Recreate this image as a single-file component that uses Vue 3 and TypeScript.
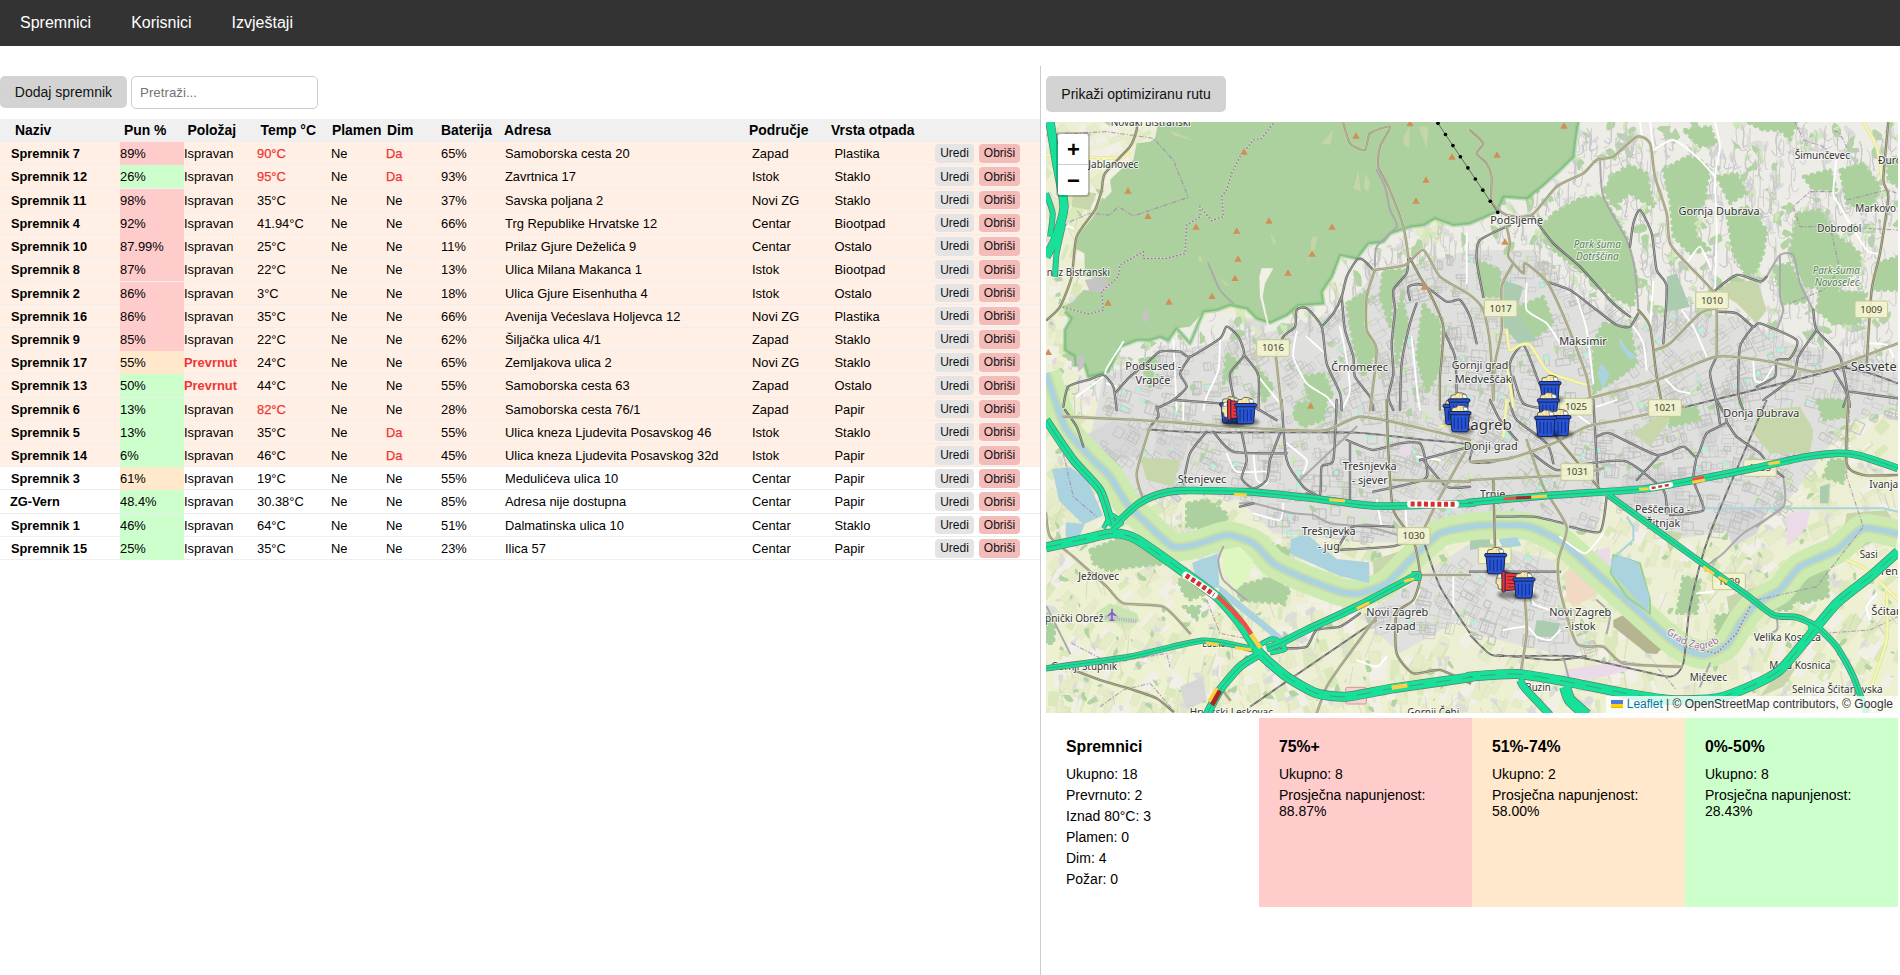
<script setup lang="ts">
import { ref, computed } from 'vue'

interface Bin {
  name: string
  fill: number
  tipped: boolean
  temp: number
  smoke: boolean
  battery: number
  address: string
  area: string
  waste: string
}

function bin(name: string, fill: number, tipped: boolean, temp: number, smoke: boolean, battery: number, address: string, area: string, waste: string): Bin {
  return { name, fill, tipped, temp, smoke, battery, address, area, waste }
}

const bins: Bin[] = [
  bin('Spremnik 7', 89, false, 90, true, 65, 'Samoborska cesta 20', 'Zapad', 'Plastika'),
  bin('Spremnik 12', 26, false, 95, true, 93, 'Zavrtnica 17', 'Istok', 'Staklo'),
  bin('Spremnik 11', 98, false, 35, false, 37, 'Savska poljana 2', 'Novi ZG', 'Staklo'),
  bin('Spremnik 4', 92, false, 41.94, false, 66, 'Trg Republike Hrvatske 12', 'Centar', 'Biootpad'),
  bin('Spremnik 10', 87.99, false, 25, false, 11, 'Prilaz Gjure Deželića 9', 'Centar', 'Ostalo'),
  bin('Spremnik 8', 87, false, 22, false, 13, 'Ulica Milana Makanca 1', 'Istok', 'Biootpad'),
  bin('Spremnik 2', 86, false, 3, false, 18, 'Ulica Gjure Eisenhutha 4', 'Istok', 'Ostalo'),
  bin('Spremnik 16', 86, false, 35, false, 66, 'Avenija Većeslava Holjevca 12', 'Novi ZG', 'Plastika'),
  bin('Spremnik 9', 85, false, 22, false, 62, 'Šiljačka ulica 4/1', 'Zapad', 'Staklo'),
  bin('Spremnik 17', 55, true, 24, false, 65, 'Zemljakova ulica 2', 'Novi ZG', 'Staklo'),
  bin('Spremnik 13', 50, true, 44, false, 55, 'Samoborska cesta 63', 'Zapad', 'Ostalo'),
  bin('Spremnik 6', 13, false, 82, false, 28, 'Samoborska cesta 76/1', 'Zapad', 'Papir'),
  bin('Spremnik 5', 13, false, 35, true, 55, 'Ulica kneza Ljudevita Posavskog 46', 'Istok', 'Staklo'),
  bin('Spremnik 14', 6, false, 46, true, 45, 'Ulica kneza Ljudevita Posavskog 32d', 'Istok', 'Papir'),
  bin('Spremnik 3', 61, false, 19, false, 55, 'Medulićeva ulica 10', 'Centar', 'Papir'),
  bin('ZG-Vern', 48.4, false, 30.38, false, 85, 'Adresa nije dostupna', 'Centar', 'Papir'),
  bin('Spremnik 1', 46, false, 64, false, 51, 'Dalmatinska ulica 10', 'Centar', 'Staklo'),
  bin('Spremnik 15', 25, false, 35, false, 23, 'Ilica 57', 'Centar', 'Papir'),
]

const query = ref('')
const shown = computed(() => bins.filter((b) => b.name.toLowerCase().includes(query.value.toLowerCase())))
const level = (v: number) => (v >= 75 ? 'high' : v > 50 ? 'mid' : 'low')
const alarming = (b: Bin) => b.fill >= 75 || b.tipped || b.temp > 80 || b.smoke

const headers = ['Naziv', 'Pun %', 'Položaj', 'Temp °C', 'Plamen', 'Dim', 'Baterija', 'Adresa', 'Područje', 'Vrsta otpada']

const stats = [
  { title: 'Spremnici', tone: 'plain', lines: ['Ukupno: 18', 'Prevrnuto: 2', 'Iznad 80°C: 3', 'Plamen: 0', 'Dim: 4', 'Požar: 0'] },
  { title: '75%+', tone: 'high', lines: ['Ukupno: 8', 'Prosječna napunjenost: 88.87%'] },
  { title: '51%-74%', tone: 'mid', lines: ['Ukupno: 2', 'Prosječna napunjenost: 58.00%'] },
  { title: '0%-50%', tone: 'low', lines: ['Ukupno: 8', 'Prosječna napunjenost: 28.43%'] },
]

/* ---- map geometry: four sheets, A B over C D, each sheet with local coordinates ---- */
type Sheet = 'A' | 'B' | 'C' | 'D'
type Pt = [number, number]
const origin: Record<Sheet, Pt> = { A: [0, 0], B: [1290, 0], C: [0, 870], D: [1290, 870] }

function pts(spec: string): Pt[] {
  let o: Pt = origin.A
  return spec.split(/\s+/).map((tok) => {
    let t = tok
    if (/^[ABCD]/.test(t)) {
      o = origin[t[0] as Sheet]
      t = t.slice(1)
    }
    const [x, y] = t.split(',').map(Number)
    return [x + o[0], y + o[1]] as Pt
  })
}
const line = (s: string) => 'M' + pts(s).map((p) => p.join(' ')).join('L')
const poly = (s: string) => line(s) + 'Z'
function smooth(s: string): string {
  const p = pts(s)
  let d = `M${p[0][0]} ${p[0][1]}`
  for (let i = 0; i < p.length - 1; i++) {
    const a = p[Math.max(0, i - 1)], b = p[i], c = p[i + 1], e = p[Math.min(p.length - 1, i + 2)]
    d += `C${b[0] + (c[0] - a[0]) / 9} ${b[1] + (c[1] - a[1]) / 9} ${c[0] - (e[0] - b[0]) / 9} ${c[1] - (e[1] - b[1]) / 9} ${c[0]} ${c[1]}`
  }
  return d
}
function inside(x: number, y: number, p: Pt[]): boolean {
  let r = false
  for (let i = 0, j = p.length - 1; i < p.length; j = i++) {
    const [xi, yi] = p[i], [xj, yj] = p[j]
    if (yi > y !== yj > y && x < ((xj - xi) * (y - yi)) / (yj - yi) + xi) r = !r
  }
  return r
}

const nature = 'A355,36 345,85 330,95 290,100 280,150 235,185 210,210 215,245 180,280 160,320 110,380 105,415 133,430 135,500 170,505 210,525 190,545 130,540 100,575 65,590 95,625 75,660 75,720 105,738 105,765 135,765 145,800 205,785 240,710 290,690 330,690 360,680 385,690 410,655 450,650 490,605 530,600 570,585 620,595 650,625 690,638 740,615 775,585 850,580 845,545 875,500 900,435 950,445 985,400 1030,395 1050,370 1110,350 1150,345 1185,325 1240,345 1290,340 B80,305 100,260 170,265 220,225 270,180 310,140 320,60 325,36'
const natureEdge = 'A75,605 95,625 75,660 75,720 105,738 105,765 135,765 145,800 205,785 240,710 290,690 330,690 360,680 385,690 410,655 450,700 490,605 530,600 570,585 620,595 650,625 690,638 740,615 775,585 850,580 845,545 875,500 900,435 950,445 985,400 1030,395 1050,370 1110,350 1150,345 1185,325 1240,345 1290,340 B80,305 100,260 170,265 220,225 270,180 310,140 320,60 325,36'
const city = 'A170,900 190,800 330,740 560,690 760,650 900,600 1000,500 1290,420 B190,420 300,560 500,640 620,600 800,620 960,700 1284,760 D1284,30 1130,70 940,320 800,390 600,420 400,290 380,400 0,350 C1290,370 1090,430 900,420 700,400 600,300 420,270 300,300 230,210 150,110'
const newZagreb = 'C960,650 1100,560 1290,430 D0,420 250,480 290,700 380,730 300,770 0,700 C1290,640 1080,760'
const suburb = 'A355,36 330,95 280,150 180,280 140,350 130,430 170,505 70,590 70,660 100,765 145,800 240,710 450,650 530,600 690,638 850,580 900,435 1110,350 1290,340 B80,305 100,260 220,225 310,140 325,36 1284,36 1284,800 900,760 600,720 300,760 0,700 A1000,870 300,880 100,860'
const farSouth = 'C18,480 200,500 450,560 650,760 900,900 1290,860 D700,900 900,700 1284,330 1284,940 C18,940'

const woods = [
  'B250,310 330,265 400,260 440,330 470,380 500,500 490,590 430,560 340,490 250,420 215,350',
  'B400,240 440,190 480,165 530,190 550,290 510,270 480,250 430,290',
  'B580,180 650,140 690,150 720,180 700,280 670,330 680,380 720,420 660,430 610,380 600,270',
  'B770,310 830,290 890,360 880,430 860,480 830,500 790,430',
  'B980,310 1050,300 1090,370 1170,430 1170,470 1100,540 1010,530 960,430',
  'B1110,180 1180,160 1230,230 1200,300 1130,280', 'B1220,460 1284,440 1284,540 1210,540',
  'B1050,540 1190,550 1170,640 1090,640 1040,600', 'B830,36 980,36 960,90 930,60 880,60',
  'B400,640 480,650 500,760 450,800 370,850 370,700', 'B910,470 960,460 990,520 1010,575 940,580',
  'B740,200 800,190 830,250 780,280', 'B640,60 720,50 740,100 690,110', 'B1000,200 1080,180 1100,240 1030,240',
  'B20,450 90,480 90,560 40,560', 'B120,600 220,560 250,640 200,680 140,650', 'B1250,150 1284,140 1284,230 1255,210',
  'A920,580 985,540 970,650 1010,720 970,800 940,700', 'A1085,560 1105,640 1070,760 1060,640',
  'A1150,580 1200,640 1200,780 1160,850 1130,740', 'A1030,480 1095,480 1060,540 1050,650 1020,560',
  'A790,800 850,790 880,860 810,880', 'A560,730 600,760 550,820', 'A650,770 700,830 670,880', 'A300,750 350,740 330,830',
  'C770,10 860,0 850,60 790,80 760,50', 'C150,450 250,410 330,430 390,490 280,500 200,510 160,490', 'C590,560 700,530 750,570 730,610 600,600',
  'C415,540 470,530 500,580 450,600 430,580', 'C430,620 480,620 470,660', 'C440,310 500,300 560,340 560,390 440,380', 'C690,430 750,450 740,490 700,480',
  'C20,640 45,680 40,730 18,730', 'D940,580 1000,500 1070,450 1075,590 1000,610', 'D620,640 640,530 690,540 680,640', 'D735,650 780,640 770,690 740,700',
  'D1080,180 1130,180 1120,250 1060,230', 'D590,30 680,20 690,60 600,80', 'D870,590 980,590 960,630 890,630', 'D1040,0 1130,0 1130,50 1060,60',
]
const scrub = [
  'D490,100 590,30 600,60 540,140', 'D860,30 990,20 1030,90 1020,160 900,160 850,100', 'D1130,340 1250,330 1284,390 1180,440 1050,460 1120,400',
  'D920,820 980,800 940,860 870,890', 'C300,170 420,180 400,260 320,240', 'B770,520 860,510 890,600 860,640 800,580 750,550',
  'D580,390 640,400 600,460', 'A100,240 170,250 150,300 95,290', 'D770,590 860,560 780,660', 'C1000,480 1090,450 1070,500 1000,540',
]
const lakes = [
  'C40,210 90,205 140,240 170,310 185,345 130,370 60,300', 'C80,370 130,375 110,420 80,410', 'C460,490 530,465 535,560 500,560 470,530',
  'C755,420 800,405 840,440 890,480 985,490 985,545 900,525 800,480 755,460', 'C540,560 730,715 715,720 540,580', 'D425,480 450,470 500,490 535,590 530,630 470,560 430,520',
  'D90,420 140,415 150,435 100,440', 'B450,690 470,720 495,740 480,745 455,710', 'B395,765 415,790 400,830 385,790',
]
const parks = ['B590,500 620,490 660,590 590,605', 'B100,510 160,530 140,600 200,690 150,705 100,650', 'D0,400 60,405 60,440 0,450', 'D200,660 270,670 260,710 190,710', 'D1050,260 1080,250 1075,310 1050,310']
const golf = 'C545,450 600,440 640,480 630,530 590,570 550,520'
const pinks = ['D285,810 470,780 480,810 370,838 280,830', 'D360,460 420,440 420,510', 'C1080,140 1115,140 1110,165 1080,165', 'D950,340 1020,330 1010,380 950,440', 'A120,860 150,860 150,890']
const greys = ['A135,510 190,500 215,530 190,545 150,545', 'A110,740 130,735 132,770 115,785', 'A305,605 322,600 328,625 312,640', 'C130,110 220,60 320,90 300,170 190,180', 'C350,100 450,110 430,180 340,160', 'D460,230 600,200 660,320 560,340 440,300', 'D680,60 760,70 730,160 690,150', 'C420,860 490,830 500,900 440,930', 'D740,330 900,320 860,400 790,440']
const brown = ['D430,660 460,645 580,740 560,762 530,760 430,680']
const clearings = [
  'A665,475 700,475 675,520 668,560 690,660 680,640 660,560 658,500', 'A940,235 955,180 962,245', 'A975,190 990,215 985,245 972,235', 'A1090,80 1110,50 1108,115 1092,105',
  'A1135,50 1165,50 1160,115', 'A815,380 832,380 825,415 800,465 812,420', 'A690,365 708,395 700,405', 'A845,100 880,60 870,105', 'A480,430 490,460 475,450', 'A537,500 572,530 555,525', 'A390,60 470,95 400,75',
]

const railways = [
  'C320,88 480,97 740,97 950,98 1140,118 1290,135 D0,185 60,188 130,170', 'C630,920 1010,660', 'D640,22 B880,834 1110,775 1130,765',
  'D0,705 40,745 80,768 300,768 480,805 600,830 640,790 660,620 720,400 890,0', 'C1150,420 1200,560 1290,700', 'B1110,770 1200,790 1284,820', 'D80,765 250,780 350,768',
]
const darkRoads = [
  'A70,890 85,830 150,808 190,795 220,830 230,900', 'A225,850 270,800 320,760 360,725 420,725 450,740 540,685 560,650 595,680 612,735 570,790 580,860', 'A612,735 655,795 655,900',
  'A450,740 420,790 440,830 400,870 350,895', 'A405,870 540,880', 'A708,740 730,680 765,650 770,600 800,595 845,650 860,760 900,850 905,900', 'A845,650 880,610 905,560 920,500 950,450 970,450 1000,480',
  'A905,560 915,660 940,740 945,800 990,860 1000,900', 'A1105,445 1100,490 1060,540 1065,600 1055,700 1060,790 1045,860 1060,900', 'A1110,570 1105,530 1150,525 1220,575 1260,570 1290,620 1310,700',
  'A1130,580 1110,640 1085,760 1080,900', 'A1215,670 1245,740 1250,850', 'B120,345 30,390 20,450 40,560', 'B185,315 250,400 330,470 430,580 480,620', 'B230,515 300,540 380,600 440,645 480,650 505,610',
  'B480,410 490,340 510,300 545,370 560,480 590,530 580,700', 'B730,545 800,495 870,515 890,500', 'B1030,600 1040,660 1110,740 1140,890', 'B740,605 800,610 850,650 870,640 980,690 960,745 920,750 915,800 860,830',
  'B1040,660 985,740 970,800 880,870', 'B850,650 810,710 805,850 820,900', 'B740,740 720,790 740,880 750,940', 'B130,860 120,760 160,705 200,800 230,890 160,880 130,800', 'B1140,845 1284,865',
  'C500,95 450,160 430,250', 'C605,100 620,180 605,235 640,265 680,240 690,180 720,100', 'C520,95 580,155 740,160', 'C725,0 740,180 790,260 830,285', 'C890,0 880,180 845,200 840,285 800,280', 'C930,125 930,300',
  'C920,120 1000,150 1080,130 1140,130 1160,200 1150,240 1000,275', 'C75,30 110,80 130,140', 'C890,450 940,380 1060,380', 'C890,450 1050,440 1120,420', 'C740,745 800,740 830,690 900,680 960,640', 'C1140,180 1290,140', 'C1150,180 1220,260 1290,260',
  'D380,110 420,100 560,165 640,140 680,170 710,100 770,65 740,0', 'D370,0 385,270', 'D680,170 670,240 700,330 600,345', 'D180,155 260,210 360,190 470,185 580,270 590,340', 'D570,165 500,240', 'D300,380 390,395 410,290',
  'D80,350 190,350 280,370', 'D770,65 800,110 870,160 900,200 940,230', 'D0,515 270,515', 'C600,320 640,310', 'D120,10 140,60 230,130 250,190', 'D60,0 90,60 140,120', 'B1090,780 1130,850 1120,890', 'C350,20 355,50 330,80', 'C590,0 640,20 710,60',
]
const greyRoads = [
  'A1005,470 1010,410 1070,350 1050,300 1035,230 1010,180', 'B390,150 400,260 470,390 495,480 505,600', 'C950,80 780,240', 'C600,310 640,310 760,340 820,345 870,370 1000,385 1120,420', 'C20,620 60,700 90,760', 'B890,500 930,435 970,435 990,520 1030,600',
  'B930,435 930,560 940,600 920,660', 'D940,230 940,320 820,400 760,460 720,490', 'D920,650 920,690 860,720', 'D410,700 420,640 380,600', 'D720,790 690,860', 'C550,440 535,480 550,540 620,600', 'D940,320 860,380', 'A505,460 540,540 580,580', 'D280,770 300,850',
]
const olive = [
  'A290,36 290,60 270,110 195,190 185,240 165,300 110,380 95,500 60,590 20,630', 'A708,740 725,900', 'A1000,480 1095,465 1150,420 1200,500 1290,555 B40,600 60,700 70,870', 'A1110,445 1140,500 1170,550 1210,650 1200,800 1200,900',
  'A1105,440 1090,350 1045,230 1015,170 1020,110 1050,50 990,70 975,120 930,100 910,40', 'A1005,480 980,560 980,660 1010,720 990,900', 'B0,60 40,100 20,130 50,160 65,200 65,275 110,315 185,315 260,230 340,190 380,150 430,140 500,80 540,100 555,200 590,310 600,400 650,460 730,545 740,600 740,740',
  'B110,350 120,400 115,440 160,490 165,460 230,515 290,640 350,800 365,900', 'B130,460 95,530 95,660 75,760 70,870', 'B505,600 540,650 560,800 580,900', 'B555,720 600,700 690,610 740,595', 'B300,880 560,810 740,740 900,755 1030,785 1110,765 1284,700',
  'B1255,36 1240,210 1255,260 1230,430 1205,540 1190,760', 'C70,50 300,60 500,75 740,90 860,90 960,50 1100,75 1290,120', 'C330,80 290,220 310,300', 'C1040,0 1045,150 1060,330 1120,420 1140,530 1120,600 1070,640 1070,760 1120,820 1200,810 1290,850',
  'C1290,130 1200,290 1160,370 1130,430', 'C18,340 30,410 100,470 200,560 250,610 370,620 450,700', 'C100,810 180,840 280,870 350,895 400,935', 'C1140,525 1290,525', 'D0,240 300,225 400,205', 'D70,240 75,450', 'D170,120 220,260 290,380 265,480 270,570 320,730 400,740 460,790 630,800',
  'D0,185 120,175 250,130 350,80 450,60 640,20', 'D250,100 400,280', 'D165,600 170,700 150,830', 'C1060,240 1290,245', 'D1135,0 1130,190 1180,225 1284,225', 'C620,770 550,860 570,900', 'C830,940 860,860 900,800 1010,650',
]
const yellowRoads = ['B1180,36 1220,110 1235,200', 'B110,660 120,720 150,705 180,705 230,780 270,800 350,825', 'B110,760 130,890', 'D1284,600 1190,510 1130,480', 'D1250,580 1250,720 1200,870', 'A18,135 230,145 265,130', 'D110,0 100,110', 'C1290,60 1200,80']
const whiteRoads = [
  'B735,36 750,110 735,200 740,360 735,540', 'B550,120 610,90 680,140 735,200', 'B510,36 515,75', 'B540,36 550,110', 'B650,460 690,410 720,470', 'B1100,140 1090,250 1110,290 1190,420 1230,430', 'B170,520 170,600 230,640 270,700', 'B320,560 350,660 370,820', 'B490,650 520,700 530,780', 'B635,600 670,650 710,740', 'B550,515 540,650', 'B580,800 620,840 660,850',
  'A770,665 760,740 800,820 860,860 890,900', 'A900,650 915,720 930,840 905,900', 'A540,690 535,780 500,860 490,900', 'A800,680 855,730', 'A1115,680 1130,830 1140,900', 'A250,695 200,775 190,800 110,860', 'A200,820 230,830', 'A400,690 410,900', 'A655,800 720,880', 'A1280,370 1280,520', 'A18,375 80,350 100,355',
  'C430,60 430,0', 'C560,160 590,215 680,215 680,250 650,240 640,160', 'C740,130 800,180 790,220', 'C640,340 720,360 730,310', 'C1010,300 1025,380', 'C1095,310 1100,380', 'C950,780 1010,800 1040,770', 'C1240,530 1240,640', 'C1140,570 1120,610', 'C1200,180 1130,170', 'D370,80 290,20', 'D270,410 345,460 400,400', 'D190,560 190,610 240,630 270,640', 'D100,690 170,680 200,710 240,720 270,690', 'D1200,660 1190,620 1220,580', 'D680,580 730,575', 'B850,755 855,810 880,815 910,770', 'B1190,700 1250,705 1270,740', 'D380,20 440,0',
]
const boundaries = ['A18,75 200,65 270,75 340,85 400,150 445,262', 'A90,335 150,310 210,315 235,290 280,318 445,262', 'B975,36 1000,90 1060,110 1100,150 1130,110 1110,70 1090,60', 'B1090,245 1020,245 970,290 990,350 1080,350 1110,480 1060,540 960,580', 'B1110,350 1284,360', 'C70,160 100,290 170,350', 'C95,730 210,790 380,760 390,800', 'D1140,0 1130,230 1180,380 1040,560 860,600', 'B1130,270 1250,240 1284,250', 'D1060,700 1200,690 1284,650', 'D430,780 560,800 620,870', 'C180,920 250,870 330,850 400,930', 'C500,600 540,700 640,720']
const dotted = ['A700,40 665,85 640,90 600,140 575,190 560,240 545,260 550,320 515,332 480,290 480,320 440,345 435,430 380,445 310,445 310,425 240,465 235,500 185,545 190,600 145,612 65,590', 'D840,620 800,700 740,760 640,740']

const greenMain = [
  { d: 'C18,442 130,418 220,400 290,418 430,515 530,590 600,670 660,760 740,830 830,880 920,890 1060,865 1290,832 D0,830 140,822 290,845 440,875 600,900 740,895 850,855 930,810 1000,730 1100,610 1200,530 1284,455', w: 26 },
  { d: 'C18,60 100,180 180,270 215,375', w: 22 },
  { d: 'C215,385 290,315 350,285 420,272 620,275 820,295 1010,318 1290,310 D0,307 230,287 520,267 620,250 700,235 860,203 1000,172 1100,160 1170,167 1284,205', w: 19 },
  { d: 'C18,805 270,770 490,722 640,748', w: 15 },
  { d: 'C680,745 720,730 800,690 950,620 1130,525', w: 20 },
  { d: 'C655,765 600,800 540,870 500,945', w: 22 },
  { d: 'D415,285 690,485 830,585 910,645 980,652 1040,680 1100,740 1150,830 1190,940', w: 16 },
  { d: 'D150,840 165,865 240,945', w: 20 }, { d: 'D285,860 300,900 350,945', w: 32 },
  { d: 'A30,36 50,160 72,290 45,390 18,440', w: 24 }, { d: 'A18,250 38,310 30,380', w: 14 }, { d: 'A70,340 50,430 45,500', w: 14 },
  { d: 'C190,385 215,345 245,370 220,385', w: 10 }, { d: 'C650,740 690,718 710,720 735,748 690,758', w: 12 }, { d: 'C640,780 660,740', w: 12 }, { d: 'C1115,520 1138,520 1138,538 1120,535', w: 8 }, { d: 'D1015,680 1055,680', w: 22 }, { d: 'D155,812 155,840', w: 12 },
]
const jams = [
  { d: 'C582,283 620,285', c: 'slow' }, { d: 'C868,299 915,303', c: 'slow' }, { d: 'C498,729 536,734', c: 'slow' }, { d: 'C585,743 634,749', c: 'slow' }, { d: 'C950,626 988,608', c: 'slow' }, { d: 'C1092,544 1122,536', c: 'slow' }, { d: 'C1055,863 1102,856', c: 'slow wide' },
  { d: 'C632,702 662,744', c: 'slow wide' }, { d: 'C532,588 575,630 612,670 634,702', c: 'jam wide' }, { d: 'C508,905 532,865', c: 'slow wide' }, { d: 'C516,915 540,872', c: 'dark wide' },
  { d: 'D100,297 140,294', c: 'jam' }, { d: 'D138,294 184,292', c: 'dark' }, { d: 'D184,291 231,288', c: 'slow' }, { d: 'D507,268 536,266', c: 'slow' }, { d: 'D666,239 702,232', c: 'jam' }, { d: 'D667,247 705,240', c: 'slow' }, { d: 'D895,192 930,186', c: 'slow' }, { d: 'D700,500 732,522', c: 'slow' }, { d: 'D745,530 772,546', c: 'slow' },
]
const closures = ['C438,526 480,554 522,584', 'C1112,312 1246,313', 'D545,264 602,254']

const peaks: Pt[] = pts('A948,77 1110,40 612,125 264,242 324,318 468,350 590,362 687,332 876,350 594,446 585,504 816,431 744,488 516,558 387,575 204,578 1236,140 1158,209 1128,272 25,726 1153,530 812,887 B282,47 81,134 105,395')
const pylons: Pt[] = Array.from({ length: 9 }, (_, i) => [1194 + i * 22.4, 40 + i * 33.4] as Pt)

const shields = [
  ['1016', 'A699,714'], ['1017', 'B92,595'], ['1010', 'B726,571'], ['1009', 'B1204,598'], ['1025', 'D318,20'], ['1021', 'D585,24'],
  ['1031', 'D322,216'], ['1030', 'C1121,408'], ['1035', 'D870,204'], ['1029', 'D777,544'], ['', 'D74,466'],
].map(([t, p]) => ({ t, x: pts(p)[0][0], y: pts(p)[0][1] }))

/* text, middle point, drawn width, variant */
const places = ([
  ['Novaki Bistranski', 'A332,48', 240, ''], ['Jablanovec', 'A220,175', 150, ''], ['nuz Bistranski', 'A115,497', 190, ''],
  ['Podsused -', 'A340,780', 168, ''], ['Vrapče', 'A339,823', 105, ''], ['Črnomerec', 'A959,782', 170, ''],
  ['Gornji grad', 'A1320,778', 170, ''], ['- Medveščak', 'A1320,820', 190, ''], ['Podsljeme', 'B140,341', 158, ''],
  ['Gornja Dubrava', 'B747,314', 243, ''], ['Šimunčevec', 'B1057,148', 166, ''], ['Đurđekovec', 'B1310,163', 172, ''],
  ['Markovo', 'B1217,306', 122, ''], ['Dobrodol', 'B1108,367', 132, ''], ['Maksimir', 'B339,705', 143, ''], ['Sesvete', 'B1211,782', 138, 'big'],
  ['Park šuma', 'B382,415', 142, 'park'], ['Dotrščina', 'B382,449', 128, 'park'], ['Park-šuma', 'B1099,493', 142, 'park'], ['Novoselec', 'B1101,528', 134, 'park'],
  ['Stenjevec', 'C486,248', 146, ''], ['Trešnjevka', 'C989,209', 162, ''], ['- sjever', 'C989,252', 108, ''], ['Trešnjevka', 'C866,406', 162, ''], ['- jug', 'C866,449', 66, ''],
  ['Ježdovec', 'C176,541', 122, ''], ['Kupnički Obrež', 'C84,667', 212, ''], ['Novi Zagreb', 'C1072,649', 186, ''], ['- zapad', 'C1072,691', 110, ''],
  ['Lučko', 'C522,741', 70, ''], ['Gornji Stupnik', 'C132,809', 198, ''], ['Hrvatski Leskovac', 'C574,948', 250, ''], ['Gornji Čehi', 'C1180,948', 156, ''],
  ['Zagreb', 'D50,91', 150, 'city'], ['Donji grad', 'D62,150', 162, ''], ['Donja Dubrava', 'D874,50', 228, ''], ['Trnje', 'D68,293', 76, ''],
  ['Peščenica -', 'D578,338', 166, ''], ['Žitnjak', 'D580,381', 102, ''], ['Ivanja Reka', 'D1280,265', 164, ''], ['Sasi', 'D1196,473', 54, ''], ['Drenje', 'D1260,524', 100, ''], ['Šćitarjevo', 'D1280,644', 152, ''],
  ['Novi Zagreb', 'D331,647', 186, ''], ['- istok', 'D331,689', 92, ''], ['Velika Kosnica', 'D952,722', 202, ''], ['Mala Kosnica', 'D990,807', 184, ''], ['Mičevec', 'D715,842', 112, ''],
  ['Buzin', 'D204,873', 76, ''], ['Selnica Šćitarjevska', 'D1102,879', 272, ''],
] as [string, string, number, string][]).map(([t, p, w, k]) => ({ t, w, k, x: pts(p)[0][0], y: pts(p)[0][1] }))

const markers = [
  { x: 537, y: 858, tipped: false }, { x: 545, y: 862, tipped: true }, { x: 582, y: 860, tipped: false },
  { x: 1207, y: 862, tipped: false }, { x: 1222, y: 846, tipped: false }, { x: 1225, y: 884, tipped: false },
  { x: 1495, y: 794, tipped: false }, { x: 1490, y: 846, tipped: false }, { x: 1525, y: 896, tipped: false }, { x: 1482, y: 898, tipped: false },
  { x: 1332, y: 1310, tipped: false }, { x: 1368, y: 1378, tipped: true }, { x: 1417, y: 1383, tipped: false },
]

/* minor streets, gardens and fields */
let seed = 20241
function rnd(): number {
  seed = (seed * 1103515245 + 12345) % 2147483648
  return seed / 2147483648
}
const cityP = pts(city), newP = pts(newZagreb), natP = pts(nature), subP = pts(suburb)
let streets = '', lanes = '', gardens = '', gardensLight = '', fieldsA = '', fieldsB = '', fieldsC = '', hedges = '', mint = '', blocks = ''
const f = (n: number) => n.toFixed(0)
function blob(x: number, y: number, r: number): string {
  let d = ''
  const n = 8
  const tilt = rnd() * 3
  for (let i = 0; i < n; i++) {
    const a = (i / n) * Math.PI * 2
    const q = r * (0.45 + rnd() * 0.8)
    const ex = Math.cos(a) * q, ey = Math.sin(a) * q * 0.55
    d += (i ? 'L' : 'M') + f(x + ex * Math.cos(tilt) - ey * Math.sin(tilt)) + ' ' + f(y + ex * Math.sin(tilt) + ey * Math.cos(tilt))
  }
  return d + 'Z'
}
function quad(x: number, y: number, w: number, h: number, a: number): string {
  const c = Math.cos(a), s = Math.sin(a)
  return `M${f(x)} ${f(y)}l${f(w * c)} ${f(w * s)}l${f(-h * s)} ${f(h * c)}l${f(-w * c)} ${f(-w * s)}Z`
}
for (let i = 0; i < 6000; i++) {
  const x = 18 + rnd() * 2556, y = 36 + rnd() * 1773
  const a = Math.sin(x / 170) * 0.4 + Math.cos(y / 190) * 0.4
  if (inside(x, y, natP)) continue
  if (inside(x, y, cityP) || inside(x, y, newP)) {
    const w = 14 + rnd() * 34, h = 10 + rnd() * 26
    streets += quad(x, y, w, h, a)
    if (i % 3 === 0) streets += quad(x, y, w / 2, h, a)
    if (i % 9 === 0) gardens += blob(x, y, 6 + rnd() * 13)
    if (i % 7 === 0) gardensLight += blob(x, y, 6 + rnd() * 12)
    if (i % 17 === 0) mint += quad(x, y, 8 + rnd() * 10, 8 + rnd() * 8, a)
    if (i % 19 === 0) blocks += quad(x, y, 20 + rnd() * 20, 10 + rnd() * 14, a)
  } else if (inside(x, y, subP)) {
    const dx = rnd() * 40 - 20, dy = 16 + rnd() * 40
    lanes += `M${f(x)} ${f(y)}q${f(dx)} ${f(dy / 3)} ${f(dx / 2)} ${f(dy)}t${f(rnd() * 50 - 25)} ${f(rnd() * 20)}`
    if (i % 4 === 0) gardens += blob(x, y, 8 + rnd() * 22)
    if (i % 4 === 1) blocks += blob(x, y, 8 + rnd() * 18)
    if (i % 7 === 0) gardensLight += blob(x, y, 6 + rnd() * 16)
  } else {
    const q = quad(x, y, 8 + rnd() * 30, 20 + rnd() * 45, a + 0.4)
    if (i % 5 === 0) fieldsA += q
    else if (i % 5 === 1) fieldsB += q
    else if (i % 5 === 2) fieldsC += q
    else if (i % 10 === 3) gardens += blob(x, y, 5 + rnd() * 14)
    else if (i % 3 === 0) hedges += `M${f(x)} ${f(y)}l${f(rnd() * 80 - 40)} ${f(30 + rnd() * 50)}`
    if (i % 11 === 0) blocks += blob(x, y, 8 + rnd() * 16)
  }
}
const sava = smooth('C18,-80 45,0 80,90 150,170 210,230 260,310 320,370 400,440 480,430 560,405 640,430 700,490 780,530 900,575 960,580 1040,550 1120,470 1200,400 1290,380 D80,375 180,380 280,430 380,520 480,610 580,700 640,745 700,765 770,735 810,670 860,610 930,570 990,500 1100,450 1180,385 1284,402')
const labelPath = smooth('D588,700 630,728 680,745 720,742 770,715')
</script>

<template>
  <div class="page">
    <nav class="topbar">
      <a class="link">Spremnici</a>
      <a class="link">Korisnici</a>
      <a class="link">Izvještaji</a>
    </nav>
    <main class="content">
      <section class="list">
        <div class="tools">
          <button class="btn">Dodaj spremnik</button>
          <input v-model="query" class="search" placeholder="Pretraži..." />
        </div>
        <div class="row head">
          <span v-for="(h, i) in headers" :key="h" :class="'h' + i">{{ h }}</span>
          <span></span>
        </div>
        <div class="rows">
          <div v-for="b in shown" :key="b.name" class="row item" :class="{ warn: alarming(b) }">
            <span class="name" :class="{ pad: b.name.startsWith('S') }">{{ b.name }}</span>
            <span class="fill" :class="level(b.fill)">{{ b.fill }}%</span>
            <span :class="{ tipped: b.tipped }">{{ b.tipped ? 'Prevrnut' : 'Ispravan' }}</span>
            <span :class="{ hot: b.temp > 80 }">{{ b.temp }}°C</span>
            <span class="flame">Ne</span>
            <span :class="{ hot: b.smoke }">{{ b.smoke ? 'Da' : 'Ne' }}</span>
            <span>{{ b.battery }}%</span>
            <span>{{ b.address }}</span>
            <span class="area">{{ b.area }}</span>
            <span class="waste">{{ b.waste }}</span>
            <span class="actions">
              <button class="mini">Uredi</button>
              <button class="mini del">Obriši</button>
            </span>
          </div>
        </div>
      </section>
      <section class="side">
        <button class="btn route">Prikaži optimiziranu rutu</button>
        <div class="map">
          <svg class="tiles" viewBox="18 36 2556 1773" preserveAspectRatio="none">
            <defs>
              <path id="grad-path" :d="labelPath" />
              <filter id="soft" x="-30%" y="-30%" width="160%" height="160%"><feGaussianBlur stdDeviation="5" /></filter>
              <g id="trash">
                <path d="M9 24L12 10L24 8L30 2L44 3L54 7L58 22Z" fill="#f8eaae" stroke="#57503a" stroke-width="2.5" />
                <path d="M44 7l13 2l3 10l-13 1z" fill="#fafafa" stroke="#666" stroke-width="2" />
                <path d="M22 10l8 10M38 5l-2 13" stroke="#d9c98a" stroke-width="2" />
                <path d="M6 28L11 79Q12 83 16 83H54Q58 83 59 79L63 28Z" class="can" />
                <rect x="2" y="21" width="66" height="10" rx="4" class="can" />
                <path d="M18 40V72M29 40V74M40 40V74M51 40V72" class="rib" />
              </g>
            </defs>
            <rect x="18" y="36" width="2556" height="1773" fill="#ecefd3" />
            <path :d="poly(suburb)" fill="#eeece6" />
            <path :d="poly(farSouth)" fill="#eef0d2" />
            <path :d="fieldsA" fill="#dbe8bb" />
            <path :d="fieldsB" fill="#f2efe6" />
            <path :d="fieldsC" fill="#e6ecc8" stroke="#d8dcc0" stroke-width="1" />
            <path :d="poly(city)" fill="#dfdfdd" />
            <path :d="poly(newZagreb)" fill="#e0e0de" />
            <path :d="blocks" fill="#dcdcda" />
            <path :d="gardens" fill="#b1d4a2" />
            <path :d="gardensLight" fill="#cfe9b8" />
            <path v-for="(s, i) in greys" :key="'g' + i" :d="poly(s)" fill="#d8d7d8" />
            <path :d="lanes" class="lane" />
            <path :d="streets" class="street" />
            <path :d="mint" fill="#b5f0dc" />
            <path :d="hedges" class="hedge" />
            <path v-for="(s, i) in woods" :key="'w' + i" :d="poly(s)" fill="#add19e" stroke="#add19e" stroke-width="10" stroke-linejoin="round" stroke-dasharray="13 7" />
            <path v-for="(s, i) in scrub" :key="'s' + i" :d="poly(s)" fill="#c8d7ab" />
            <path v-for="(s, i) in parks" :key="'p' + i" :d="poly(s)" fill="#abccb0" />
            <path :d="poly(nature)" fill="#acd19f" />
            <path :d="line(natureEdge)" class="edge-wide" />
            <path :d="line(natureEdge)" class="edge" />
            <path v-for="(s, i) in clearings" :key="'c' + i" :d="poly(s)" :fill="i ? '#c4d6a6' : '#f1efe6'" />
            <path v-for="(s, i) in greys.slice(0, 3)" :key="'h' + i" :d="poly(s)" fill="#c5c3c3" />
            <path v-for="(s, i) in pinks" :key="'k' + i" :d="poly(s)" fill="#ebdbe8" />
            <path v-for="(s, i) in brown" :key="'b' + i" :d="poly(s)" fill="#b6b591" />
            <path :d="poly('D285,520 320,505 400,545 370,590 310,620 290,600')" fill="#f1d9c4" />
            <path :d="sava" class="bank" />
            <path :d="sava" class="levee" />
            <path :d="sava" class="river" />
            <path :d="line('D700,325 1240,325 1284,335')" stroke="#aad3df" stroke-width="6" fill="none" />
            <path :d="line('D440,465 490,420 490,380 470,350')" stroke="#aad3df" stroke-width="6" fill="none" />
            <path :d="poly(golf)" fill="#def6c0" />
            <path :d="poly('D430,465 480,480 510,490 540,600 540,640 470,590 422,520')" fill="#bcdcb4" stroke="#9fcf99" stroke-width="6" />
            <path v-for="(s, i) in lakes" :key="'l' + i" :d="poly(s)" fill="#aad3df" stroke="#aad3df" stroke-width="6" stroke-linejoin="round" />
            <path :d="poly('C165,640 210,610 290,640 300,665 250,672 190,665')" fill="#c9e6b2" />
            <path :d="line('C195,652 290,664')" stroke="#bdb2d0" stroke-width="12" stroke-dasharray="4 3" />

            <path v-for="(s, i) in boundaries" :key="'bo' + i" :d="line(s)" class="boundary" />
            <path v-for="(s, i) in dotted" :key="'dp' + i" :d="line(s)" class="dots-base" />
            <path v-for="(s, i) in dotted" :key="'do' + i" :d="line(s)" class="dots" />
            <path v-for="(s, i) in whiteRoads" :key="'wr' + i" :d="smooth(s)" class="road white" />
            <path v-for="(s, i) in greyRoads" :key="'gr' + i" :d="smooth(s)" class="road grey" />
            <path v-for="(s, i) in railways" :key="'ra' + i" :d="smooth(s)" class="rail" />
            <path v-for="(s, i) in railways" :key="'rb' + i" :d="smooth(s)" class="rail-dash" />
            <path v-for="(s, i) in darkRoads" :key="'dr' + i" :d="smooth(s)" class="road dark" />
            <path v-for="(s, i) in darkRoads" :key="'dq' + i" :d="smooth(s)" class="road dark-in" />
            <path v-for="(s, i) in yellowRoads" :key="'yr' + i" :d="smooth(s)" class="road yellow" />
            <path v-for="(s, i) in yellowRoads" :key="'yq' + i" :d="smooth(s)" class="road yellow-in" />
            <path v-for="(s, i) in olive" :key="'or' + i" :d="smooth(s)" class="road olive" />
            <path v-for="(s, i) in olive" :key="'oq' + i" :d="smooth(s)" class="road olive-in" :class="{ deep: i % 3 === 0 && i !== 6 }" />
            <path v-for="(s, i) in olive" :key="'oz' + i" :d="smooth(s)" class="road olive-mid" />

            <path v-for="(p, i) in peaks" :key="'pk' + i" :d="`M${p[0] - 11} ${p[1] + 9}h22l-11 -19z`" fill="#d08f55" />
            <path d="M1194 40L1373 307" stroke="#555" stroke-width="2.5" />
            <circle v-for="(p, i) in pylons" :key="'py' + i" :cx="p[0]" :cy="p[1]" r="5.5" fill="#000" />
            <path :d="line('C216,626 216,660')" stroke="#8461c4" stroke-width="5" />
            <path :d="poly('C216,634 234,650 216,645 198,650')" fill="#8461c4" />
            <path :d="poly('C216,655 226,663 206,663')" fill="#8461c4" />

            <g v-for="(s, i) in shields" :key="'sh' + i">
              <rect :x="s.x - 49" :y="s.y - 25" width="98" height="50" rx="5" class="shield" />
              <text :x="s.x" :y="s.y + 10" class="ref">{{ s.t }}</text>
            </g>
            <g v-for="(p, i) in places" :key="'pl' + i">
              <text :x="p.x" :y="p.y" class="place" :class="p.k" :textLength="p.w" lengthAdjust="spacingAndGlyphs">{{ p.t }}</text>
            </g>
            <text class="place county"><textPath href="#grad-path">Grad Zagreb</textPath></text>
            <rect x="917" y="1732" width="62" height="50" rx="5" fill="#f3c9cf" fill-opacity=".7" stroke="#d7929d" stroke-width="3" />

            <path v-for="(g, i) in greenMain" :key="'ga' + i" :d="smooth(g.d)" class="flow" stroke="#5b7d70" :stroke-width="g.w + 4" />
            <path v-for="(g, i) in greenMain" :key="'gb' + i" :d="smooth(g.d)" class="flow" stroke="#17e098" :stroke-width="g.w" />
            <path v-for="(g, i) in greenMain.slice(0, 7)" :key="'gc' + i" :d="smooth(g.d)" class="flow" stroke="#4d8a73" stroke-width="2" :stroke-dasharray="i ? '' : '46 34'" />
            <path v-for="(j, i) in jams" :key="'j' + i" :d="line(j.d)" class="traffic" :class="j.c" />
            <path v-for="(c, i) in closures" :key="'ca' + i" :d="line(c)" class="closed-base" :class="{ thin: i === 2 }" />
            <path v-for="(c, i) in closures" :key="'cb' + i" :d="line(c)" class="closed" :class="{ thin: i === 2 }" />

            <g v-for="(m, i) in markers" :key="'m' + i" :transform="`translate(${m.x} ${m.y})`">
              <ellipse cx="40" cy="76" rx="36" ry="12" fill="#000" opacity=".42" filter="url(#soft)" />
              <g :transform="m.tipped ? 'rotate(-90 34 36)' : ''" :class="m.tipped ? 'red' : 'blue'">
                <use href="#trash" :transform="m.tipped ? 'scale(.95)' : 'scale(1 .98)'" />
              </g>
            </g>
          </svg>
          <div class="zoom">
            <span class="zbtn plus">+</span>
            <span class="zbtn">−</span>
          </div>
          <div class="credit">
            <svg class="flag" viewBox="0 0 12 8"><path fill="#4C7BE1" d="M0 0h12v4H0z" /><path fill="#FFD500" d="M0 4h12v3H0z" /><path fill="#E0BC00" d="M0 7h12v1H0z" /></svg>
            <a class="leaflet">Leaflet</a> | © OpenStreetMap contributors, © Google
          </div>
        </div>
        <div class="stats">
          <div v-for="s in stats" :key="s.title" class="card" :class="s.tone">
            <h3>{{ s.title }}</h3>
            <p v-for="l in s.lines" :key="l">{{ l }}</p>
          </div>
        </div>
      </section>
    </main>
  </div>
</template>

<style>
body { margin: 0; overflow: hidden; }
</style>

<style scoped>
.page { font-family: 'Liberation Sans', Arial, sans-serif; color: #000; height: 975px; display: flex; flex-direction: column; background: #fff; }
.topbar { background: #333; height: 46px; display: flex; padding-left: 20px; gap: 40px; align-items: center; flex: none; box-sizing: border-box; padding-bottom: 1px; }
.link { color: #fff; font-size: 16px; }
.content { display: flex; flex: 1; margin-top: 20px; min-height: 0; }
.list { width: 1040px; flex: none; border-right: 1px solid #ccc; }
.side { flex: 1; margin: 10px 2px 0 5px; min-width: 0; }
.tools { display: flex; gap: 4px; padding-top: 10px; height: 43px; align-items: flex-start; }
.btn { border: 0; background: #d3d3d3; border-radius: 5px; font: 14px 'Liberation Sans', Arial, sans-serif; color: #111; padding: 0; width: 127px; height: 32px; }
.btn.route { width: 180px; height: 36px; display: block; }
.search { box-sizing: border-box; width: 187px; height: 33px; border: 1px solid #ccc; border-radius: 5px; padding: 0 8px; font: 13.33px 'Liberation Sans', Arial, sans-serif; outline: none; }
.search::placeholder { color: #757575; }
.row { display: grid; grid-template-columns: 120px 64px 73px 74px 55px 55px 64px 244px 83px 103px 105px; align-items: stretch; white-space: nowrap; }
.head { height: 22px; line-height: 22.5px; background: #f0f0f0; font-size: 13.9px; font-weight: bold; }
.head .h0 { padding-left: 15px; }
.head .h1 { padding-left: 4px; }
.head .h2, .head .h3 { padding-left: 3.5px; }
.head .h4 { padding-left: 1px; }
.head .h5 { padding-left: 1px; }
.head .h7 { margin-left: -1px; }
.head .h9 { margin-left: -1px; }
.rows { padding-top: 1.2px; box-shadow: inset 0 1px 0 #eee; }
.item { height: 23.22px; box-sizing: border-box; border-bottom: 1px solid #eee; font-size: 12.9px; line-height: 23px; }
.item.warn { background: #ffefe4; }
.name { font-weight: bold; font-size: 12.8px; padding-left: 10px; }
.name.pad { padding-left: 11px; }
.fill.high, .card.high { background: #fcc; }
.fill.mid, .card.mid { background: #ffe8cb; }
.fill.low, .card.low { background: #cfc; }
.tipped { color: #f03535; font-weight: bold; }
.hot { color: #f03535; -webkit-text-stroke: 0.25px #f03535; }
.area { padding-left: 3px; }
.waste { padding-left: 2.5px; }
.actions { display: flex; gap: 5px; padding: 2px 0 0 0; line-height: 0; align-items: flex-start; }
.mini { border: 0; padding: 0; width: 39px; height: 18.6px; border-radius: 4px; background: #e4e4e4; font: 12px 'Liberation Sans', Arial, sans-serif; color: #111; }
.mini.del { width: 41px; background: #f3bcb9; }
.map { position: relative; margin-top: 10px; height: 591px; overflow: hidden; }
.tiles { display: block; width: 852px; height: 591px; }
.zoom { position: absolute; left: 10px; top: 10px; border: 2px solid rgba(0, 0, 0, 0.2); border-radius: 4px; background-clip: padding-box; background-color: #fff; width: 30px; }
.zbtn { display: block; height: 30px; text-align: center; font: bold 22px/31px 'Liberation Sans', sans-serif; text-indent: 1px; }
.plus { border-bottom: 1px solid #ccc; }
.credit { position: absolute; right: 0; bottom: 0; background: rgba(255, 255, 255, 0.8); font-size: 12px; line-height: 17px; padding: 0 5px; color: #333; white-space: nowrap; }
.flag { width: 12px; height: 8px; margin-right: 4px; }
.leaflet { color: #0078a8; }
.stats { display: grid; grid-template-columns: repeat(4, 1fr); margin-top: 5px; height: 189px; }
.card { padding: 20px 20px 0; font-size: 14px; line-height: 16px; }
.card h3 { margin: 0 0 10px; font-size: 15.8px; line-height: 18px; }
.card p { margin: 0 0 5px; }

.lane { fill: none; stroke: #c9c9cb; stroke-width: 2.6; }
.street { fill: none; stroke: #c3c3c3; stroke-width: 1.8; }
.hedge { fill: none; stroke: #cfcfc0; stroke-width: 2; }
.edge-wide { fill: none; stroke: #8ec78a; stroke-opacity: 0.5; stroke-width: 14; stroke-linejoin: round; }
.edge { fill: none; stroke: #78b976; stroke-opacity: 0.8; stroke-width: 5; stroke-linejoin: round; }
.bank { fill: none; stroke: #cdebb0; stroke-width: 84; }
.levee { fill: none; stroke: #b9c4a8; stroke-width: 30; stroke-opacity: 0.35; }
.river { fill: none; stroke: #aad3df; stroke-width: 17; }
.boundary { fill: none; stroke: #a27fae; stroke-opacity: 0.7; stroke-width: 3.5; stroke-dasharray: 14 5 4 5; }
.dots-base { fill: none; stroke: #d3dccb; stroke-width: 4.5; }
.dots { fill: none; stroke: #94808f; stroke-width: 4; stroke-dasharray: 6 5; }
.road { fill: none; stroke-linejoin: round; stroke-linecap: round; }
.white { stroke: #fff; stroke-width: 5.5; }
.grey { stroke: #aaa; stroke-width: 6; }
.dark { stroke: #666; stroke-width: 7; }
.dark-in { stroke: #b8b8b8; stroke-width: 2.4; }
.yellow { stroke: #dcdc92; stroke-width: 10; }
.yellow-in { stroke: #f6f7ae; stroke-width: 7; }
.olive { stroke: #d4d79b; stroke-width: 9.5; }
.olive-in { stroke: #96968d; stroke-width: 6.5; }
.olive-in.deep { stroke: #75756e; }
.olive-mid { stroke: #c4c4a6; stroke-width: 2.2; }
.rail { fill: none; stroke: #6a6a6a; stroke-width: 5.5; }
.rail-dash { fill: none; stroke: #c4c4c4; stroke-width: 2.2; stroke-dasharray: 16 16; }
.shield { fill: #f3f4cf; fill-opacity: 0.9; stroke: #c5c88f; stroke-width: 3; }
.ref { font: 29px 'Noto Sans', sans-serif; fill: #46462c; text-anchor: middle; }
.place { font: 32px 'Noto Sans', sans-serif; fill: #333; text-anchor: middle; paint-order: stroke; stroke: #fff; stroke-opacity: 0.7; stroke-width: 6; stroke-linejoin: round; }
.big { font-size: 36px; }
.city { font-size: 42px; }
.park { font-style: italic; fill: #5b7d57; }
.county { font-size: 30px; fill: #9a6fa5; text-anchor: start; }
.flow { fill: none; stroke-linejoin: round; }
.traffic { fill: none; stroke-width: 9; }
.traffic.wide { stroke-width: 13; }
.slow { stroke: #ffcf43; }
.jam { stroke: #f24e42; }
.dark.traffic { stroke: #a92727; stroke-width: 9; }
.dark.traffic.wide { stroke-width: 14; }
.closed-base { fill: none; stroke: #fff; stroke-width: 22; stroke-linecap: round; }
.closed-base.thin { stroke-width: 15; }
.closed { fill: none; stroke: #d6302a; stroke-width: 15; stroke-dasharray: 12 8; }
.closed.thin { stroke-width: 7; }
.can { fill: var(--can); stroke: #1b2140; stroke-width: 3; }
.rib { fill: none; stroke: var(--rib); stroke-width: 3.5; stroke-linecap: round; }
.blue { --can: #2755d6; --rib: #143390; }
.red { --can: #e6383e; --rib: #8d1d26; }
</style>
